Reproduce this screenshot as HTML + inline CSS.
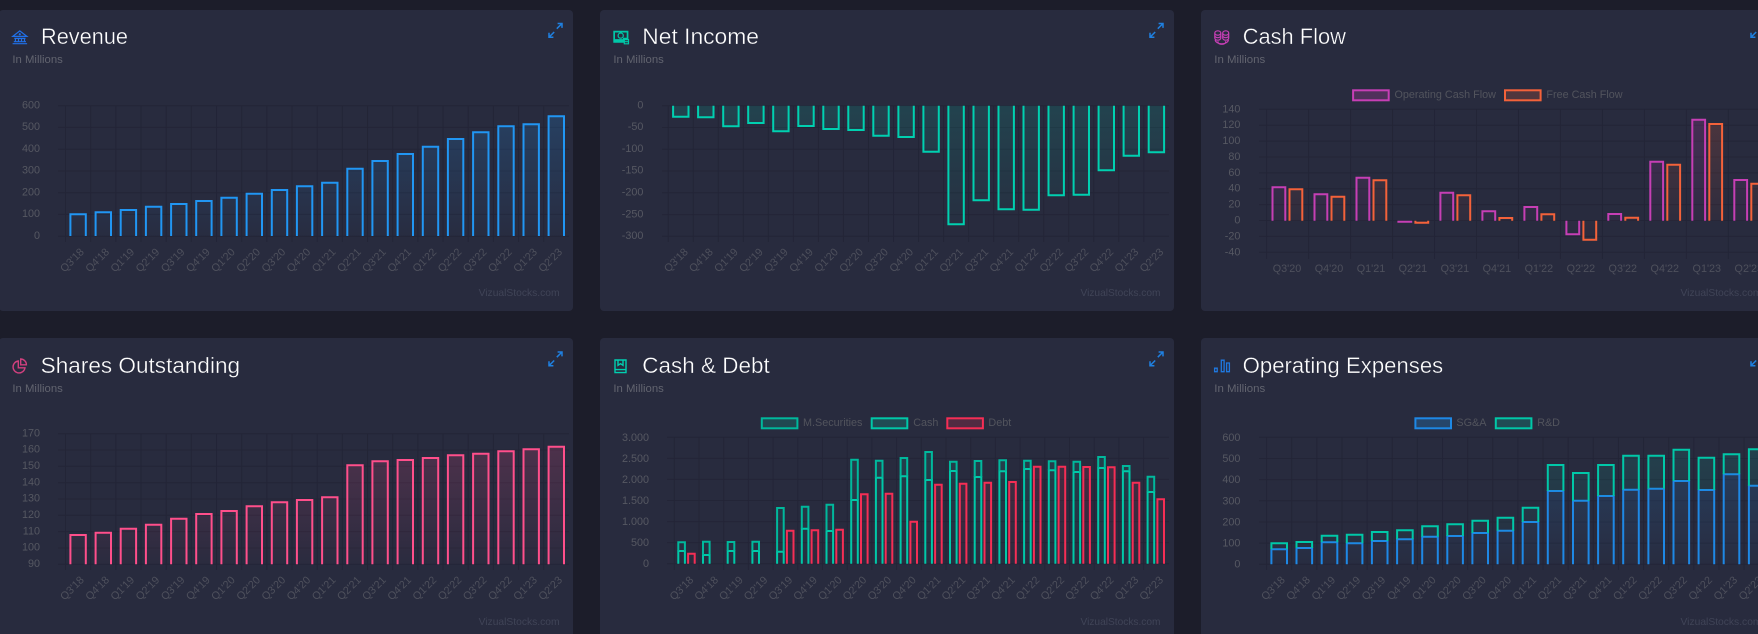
<!DOCTYPE html>
<html><head><meta charset="utf-8"><title>Charts</title>
<style>
html,body{margin:0;padding:0;background:#1c1d2a;width:1758px;height:634px;overflow:hidden}
svg{display:block}
text{font-family:"Liberation Sans",sans-serif}
.t{font-size:22px;fill:#fff;stroke:#282b3e;stroke-width:.35px}
.s{font-size:11px;fill:#62646f}
.w{font-size:10.5px;fill:#404457}
.y{font-size:10.8px;fill:#565862;text-anchor:end}
.x{font-size:10.8px;fill:#4e505c;text-anchor:middle}
.l{font-size:10.8px;fill:#52545d}
.g{fill:none;stroke:#232537;stroke-width:1}
.e{fill:none;stroke:#1f80e0;stroke-width:1.5}
.b{stroke-width:2}
</style></head><body>
<svg xmlns="http://www.w3.org/2000/svg" width="1758" height="634" viewBox="0 0 1758 634">
<defs>
<linearGradient id="gb" gradientUnits="userSpaceOnUse" x1="0" y1="100" x2="0" y2="245"><stop offset="0" stop-color="#2196f3" stop-opacity=".22"/><stop offset="1" stop-color="#2196f3" stop-opacity="0"/></linearGradient>
<linearGradient id="gt" gradientUnits="userSpaceOnUse" x1="0" y1="100" x2="0" y2="250"><stop offset="0" stop-color="#00d0b0" stop-opacity=".15"/><stop offset="1" stop-color="#00d0b0" stop-opacity="0"/></linearGradient>
<linearGradient id="gp" gradientUnits="userSpaceOnUse" x1="0" y1="100" x2="0" y2="245"><stop offset="0" stop-color="#ff4f8b" stop-opacity=".2"/><stop offset="1" stop-color="#ff4f8b" stop-opacity="0"/></linearGradient>
<linearGradient id="gu" gradientUnits="userSpaceOnUse" x1="0" y1="100" x2="0" y2="245"><stop offset="0" stop-color="#c63fb5" stop-opacity=".22"/><stop offset="1" stop-color="#c63fb5" stop-opacity="0"/></linearGradient>
<linearGradient id="go" gradientUnits="userSpaceOnUse" x1="0" y1="100" x2="0" y2="245"><stop offset="0" stop-color="#f4623a" stop-opacity=".2"/><stop offset="1" stop-color="#f4623a" stop-opacity="0"/></linearGradient>
<linearGradient id="gr" gradientUnits="userSpaceOnUse" x1="0" y1="100" x2="0" y2="245"><stop offset="0" stop-color="#f52e55" stop-opacity=".2"/><stop offset="1" stop-color="#f52e55" stop-opacity="0"/></linearGradient>
</defs>

<!-- Revenue -->
<g>
<rect x="-1" y="10" width="574" height="301" rx="4" fill="#282b3e"/>
<path fill="none" stroke="#2070e8" stroke-width="1.200" d="M12.800 36.400L19.800 30.900L26.900 36.400ZM14.300 38.400H25.500M15.400 38.400V41.400M18.500 38.400V41.400M21.500 38.400V41.400M24.500 38.400V41.400M13.800 41.700H26M12.600 43.700H27.100"/><circle cx="19.800" cy="34.200" r="1.100" fill="#2070e8"/>
<text class="t" x="41" y="44" textLength="87" lengthAdjust="spacingAndGlyphs">Revenue</text>
<text class="s" x="12.400" y="63" textLength="50.400" lengthAdjust="spacingAndGlyphs">In Millions</text>
<path class="e" d="M562 23.500L556.800 28.700M557.600 23.500H562V27.900M549 37.200L554.200 32M549 32.700V37.200H553.400"/>
<path class="g" d="M58 105.700H569M58 127.400H569M58 149.200H569M58 171H569M58 192.700H569M58 214.400H569M58 236.200H569"/>
<path class="g" d="M65.500 105.700V242m25.170-136.300V242m25.170-136.300V242m25.170-136.300V242m25.170-136.300V242m25.170-136.300V242m25.170-136.300V242m25.170-136.300V242m25.170-136.300V242m25.170-136.300V242m25.170-136.300V242m25.170-136.300V242m25.170-136.300V242m25.170-136.300V242m25.170-136.300V242m25.170-136.300V242m25.170-136.300V242m25.170-136.300V242m25.170-136.300V242m25.170-136.300V242"/>
<text class="y" x="40" y="108.400">600</text><text class="y" x="40" y="130.100">500</text><text class="y" x="40" y="151.900">400</text><text class="y" x="40" y="173.700">300</text><text class="y" x="40" y="195.400">200</text><text class="y" x="40" y="217.100">100</text><text class="y" x="40" y="238.900">0</text>
<path class="b" fill="url(#gb)" stroke="#2196f3" d="M70.400 236V214.300h15.400V236M95.600 236V212.300h15.400V236M120.700 236V210h15.400V236M145.900 236V206.700h15.400V236M171.100 236V204h15.400V236M196.200 236V201h15.400V236M221.400 236V197.700h15.400V236M246.600 236V193.700h15.400V236M271.800 236V190h15.400V236M296.900 236V186.300h15.400V236M322.100 236V182.700h15.400V236M347.300 236V168.700h15.400V236M372.400 236V161h15.400V236M397.600 236V154h15.400V236M422.800 236V146.700h15.400V236M447.900 236V139h15.400V236M473.100 236V132.300h15.400V236M498.300 236V126.300h15.400V236M523.500 236V124.300h15.400V236M548.600 236V116.300h15.400V236"/>
<text class="x" transform="translate(71.900 260) rotate(-45)" y="3.800">Q3'18</text><text class="x" transform="translate(97.100 260) rotate(-45)" y="3.800">Q4'18</text><text class="x" transform="translate(122.200 260) rotate(-45)" y="3.800">Q1'19</text><text class="x" transform="translate(147.400 260) rotate(-45)" y="3.800">Q2'19</text><text class="x" transform="translate(172.600 260) rotate(-45)" y="3.800">Q3'19</text><text class="x" transform="translate(197.800 260) rotate(-45)" y="3.800">Q4'19</text><text class="x" transform="translate(222.900 260) rotate(-45)" y="3.800">Q1'20</text><text class="x" transform="translate(248.100 260) rotate(-45)" y="3.800">Q2'20</text><text class="x" transform="translate(273.300 260) rotate(-45)" y="3.800">Q3'20</text><text class="x" transform="translate(298.400 260) rotate(-45)" y="3.800">Q4'20</text><text class="x" transform="translate(323.600 260) rotate(-45)" y="3.800">Q1'21</text><text class="x" transform="translate(348.800 260) rotate(-45)" y="3.800">Q2'21</text><text class="x" transform="translate(373.900 260) rotate(-45)" y="3.800">Q3'21</text><text class="x" transform="translate(399.100 260) rotate(-45)" y="3.800">Q4'21</text><text class="x" transform="translate(424.300 260) rotate(-45)" y="3.800">Q1'22</text><text class="x" transform="translate(449.500 260) rotate(-45)" y="3.800">Q2'22</text><text class="x" transform="translate(474.600 260) rotate(-45)" y="3.800">Q3'22</text><text class="x" transform="translate(499.800 260) rotate(-45)" y="3.800">Q4'22</text><text class="x" transform="translate(525 260) rotate(-45)" y="3.800">Q1'23</text><text class="x" transform="translate(550.100 260) rotate(-45)" y="3.800">Q2'23</text>
<text class="w" x="478.600" y="296" textLength="81" lengthAdjust="spacingAndGlyphs">VizualStocks.com</text>
</g>

<!-- Net Income -->
<g transform="translate(601 0)">
<rect x="-1" y="10" width="574" height="301" rx="4" fill="#282b3e"/>
<path fill="#00c8a8" fill-rule="evenodd" d="M12.300 30.800h15.100v9h-4.400v3h-10.700ZM14 32.500v6.600h8v-1.300h3.700v-5.300Z"/><circle cx="19.700" cy="35.600" r="2.600" fill="none" stroke="#00c8a8" stroke-width="1.200"/><path fill="none" stroke="#00c8a8" stroke-width="1.200" d="M23.300 39.600h4.200v4.200h-4.200ZM23.300 41.700h4.200"/>
<text class="t" x="41.300" y="44" textLength="116.600" lengthAdjust="spacingAndGlyphs">Net Income</text>
<text class="s" x="12.400" y="63" textLength="50.400" lengthAdjust="spacingAndGlyphs">In Millions</text>
<path class="e" d="M562 23.500L556.800 28.700M557.600 23.500H562V27.900M549 37.200L554.200 32M549 32.700V37.200H553.400"/>
<path class="g" d="M61 105.700H568M61 127.500H568M61 149.200H568M61 171H568M61 192.800H568M61 214.600H568M61 236.300H568"/>
<path class="g" d="M67.250 105.700V242m25.030-136.300V242m25.030-136.300V242m25.030-136.300V242m25.030-136.300V242m25.030-136.300V242m25.030-136.300V242m25.030-136.300V242m25.030-136.300V242m25.030-136.300V242m25.030-136.300V242m25.030-136.300V242m25.030-136.300V242m25.030-136.300V242m25.030-136.300V242m25.030-136.300V242m25.030-136.300V242m25.030-136.300V242m25.030-136.300V242m25.030-136.300V242"/>
<text class="y" x="42.400" y="108.400">0</text><text class="y" x="42.400" y="130.200">-50</text><text class="y" x="42.400" y="151.900">-100</text><text class="y" x="42.400" y="173.700">-150</text><text class="y" x="42.400" y="195.500">-200</text><text class="y" x="42.400" y="217.300">-250</text><text class="y" x="42.400" y="239">-300</text>
<path class="b" fill="url(#gt)" stroke="#00d0b0" d="M72.100 105.700V116.700h15.400V105.700M97.100 105.700V117.300h15.400V105.700M122.200 105.700V126.300h15.400V105.700M147.200 105.700V123h15.400V105.700M172.200 105.700V131.300h15.400V105.700M197.300 105.700V126h15.400V105.700M222.300 105.700V129h15.400V105.700M247.300 105.700V130h15.400V105.700M272.300 105.700V135.700h15.400V105.700M297.400 105.700V137h15.400V105.700M322.400 105.700V151.700h15.400V105.700M347.400 105.700V224.300h15.400V105.700M372.500 105.700V200.300h15.400V105.700M397.500 105.700V209.300h15.400V105.700M422.500 105.700V209.700h15.400V105.700M447.500 105.700V195.300h15.400V105.700M472.600 105.700V194.700h15.400V105.700M497.600 105.700V170.300h15.400V105.700M522.600 105.700V155.700h15.400V105.700M547.700 105.700V152.300h15.400V105.700"/>
<text class="x" transform="translate(74.800 260) rotate(-45)" y="3.800">Q3'18</text><text class="x" transform="translate(99.800 260) rotate(-45)" y="3.800">Q4'18</text><text class="x" transform="translate(124.900 260) rotate(-45)" y="3.800">Q1'19</text><text class="x" transform="translate(149.900 260) rotate(-45)" y="3.800">Q2'19</text><text class="x" transform="translate(174.900 260) rotate(-45)" y="3.800">Q3'19</text><text class="x" transform="translate(200 260) rotate(-45)" y="3.800">Q4'19</text><text class="x" transform="translate(225 260) rotate(-45)" y="3.800">Q1'20</text><text class="x" transform="translate(250 260) rotate(-45)" y="3.800">Q2'20</text><text class="x" transform="translate(275 260) rotate(-45)" y="3.800">Q3'20</text><text class="x" transform="translate(300.100 260) rotate(-45)" y="3.800">Q4'20</text><text class="x" transform="translate(325.100 260) rotate(-45)" y="3.800">Q1'21</text><text class="x" transform="translate(350.100 260) rotate(-45)" y="3.800">Q2'21</text><text class="x" transform="translate(375.200 260) rotate(-45)" y="3.800">Q3'21</text><text class="x" transform="translate(400.200 260) rotate(-45)" y="3.800">Q4'21</text><text class="x" transform="translate(425.200 260) rotate(-45)" y="3.800">Q1'22</text><text class="x" transform="translate(450.200 260) rotate(-45)" y="3.800">Q2'22</text><text class="x" transform="translate(475.300 260) rotate(-45)" y="3.800">Q3'22</text><text class="x" transform="translate(500.300 260) rotate(-45)" y="3.800">Q4'22</text><text class="x" transform="translate(525.300 260) rotate(-45)" y="3.800">Q1'23</text><text class="x" transform="translate(550.400 260) rotate(-45)" y="3.800">Q2'23</text>
<text class="w" x="479.500" y="296" textLength="80" lengthAdjust="spacingAndGlyphs">VizualStocks.com</text>
</g>

<!-- Cash Flow -->
<g transform="translate(1202 0)">
<rect x="-1" y="10" width="574" height="301" rx="4" fill="#282b3e"/>
<path fill="none" stroke="#c63fb5" stroke-width="1.200" d="M12.800 33a3 2.200 0 0 1 6 0v5a3 2.200 0 0 1-6 0ZM12.800 33a3 2.200 0 0 0 6 0M12.800 35.500a3 2.200 0 0 0 6 0M20.700 33a3 2.200 0 0 1 6 0v5a3 2.200 0 0 1-6 0ZM20.700 33a3 2.200 0 0 0 6 0M20.700 35.500a3 2.200 0 0 0 6 0M13.200 39.800a6.600 4 0 0 0 13.200 0M16 41.300v1a3.800 2 0 0 0 7.600 0v-1"/>
<text class="t" x="40.700" y="44" textLength="103.200" lengthAdjust="spacingAndGlyphs">Cash Flow</text>
<text class="s" x="12.300" y="63" textLength="50.900" lengthAdjust="spacingAndGlyphs">In Millions</text>
<path class="e" d="M562 23.500L556.800 28.700M557.600 23.500H562V27.900M549 37.200L554.200 32M549 32.700V37.200H553.400"/>
<rect x="151.100" y="90.300" width="35.600" height="10" fill="#c63fb5" fill-opacity=".25" stroke="#c63fb5" stroke-width="2"/>
<text class="l" x="192.500" y="98">Operating Cash Flow</text>
<rect x="303" y="90.300" width="35.600" height="10" fill="#f4623a" fill-opacity=".2" stroke="#f4623a" stroke-width="2"/>
<text class="l" x="344.400" y="98">Free Cash Flow</text>
<path class="g" d="M57 109.300H569M57 125.200H569M57 141.100H569M57 157H569M57 172.900H569M57 188.700H569M57 204.600H569M57 220.500H569M57 236.400H569M57 252.300H569"/>
<path class="g" d="M64.600 109.300V259m41.980-149.700V259m41.980-149.700V259m41.980-149.700V259m41.980-149.700V259m41.980-149.700V259m41.980-149.700V259m41.980-149.700V259m41.980-149.700V259m41.980-149.700V259m41.980-149.700V259m41.980-149.700V259"/>
<text class="y" x="38.400" y="112.300">140</text><text class="y" x="38.400" y="128.200">120</text><text class="y" x="38.400" y="144">100</text><text class="y" x="38.400" y="160">80</text><text class="y" x="38.400" y="175.900">60</text><text class="y" x="38.400" y="191.700">40</text><text class="y" x="38.400" y="207.600">20</text><text class="y" x="38.400" y="223.500">0</text><text class="y" x="38.400" y="239.400">-20</text><text class="y" x="38.400" y="255.300">-40</text>
<path class="b" fill="url(#gu)" stroke="#c63fb5" d="M70.500 220.700V187.300h12.800V220.700M112.500 220.700V194.300h12.800V220.700M154.500 220.700V177.700h12.800V220.700M196.400 220.700V221.700h12.800V220.700M238.400 220.700V192.700h12.800V220.700M280.400 220.700V211.300h12.800V220.700M322.400 220.700V207h12.800V220.700M364.400 220.700V234.300h12.800V220.700M406.300 220.700V214h12.800V220.700M448.300 220.700V161.700h12.800V220.700M490.300 220.700V119.700h12.800V220.700M532.300 220.700V180h12.800V220.700"/>
<path class="b" fill="url(#go)" stroke="#f4623a" d="M87.500 220.700V189.300h12.800V220.700M129.500 220.700V196.700h12.800V220.700M171.500 220.700V180.300h12.800V220.700M213.400 220.700V222.700h12.800V220.700M255.400 220.700V195.300h12.800V220.700M297.400 220.700V218h12.800V220.700M339.400 220.700V214.300h12.800V220.700M381.400 220.700V239.700h12.800V220.700M423.300 220.700V217.700h12.800V220.700M465.300 220.700V164.700h12.800V220.700M507.300 220.700V124h12.800V220.700M549.300 220.700V183.700h12.800V220.700"/>
<g class="x"><text x="85" y="272">Q3'20</text><text x="127" y="272">Q4'20</text><text x="169" y="272">Q1'21</text><text x="210.900" y="272">Q2'21</text><text x="252.900" y="272">Q3'21</text><text x="294.900" y="272">Q4'21</text><text x="336.900" y="272">Q1'22</text><text x="378.900" y="272">Q2'22</text><text x="420.800" y="272">Q3'22</text><text x="462.800" y="272">Q4'22</text><text x="504.800" y="272">Q1'23</text><text x="546.800" y="272">Q2'23</text></g>
<text class="w" x="478.500" y="296" textLength="81" lengthAdjust="spacingAndGlyphs">VizualStocks.com</text>
</g>

<!-- Shares Outstanding -->
<g transform="translate(0 328)">
<rect x="-1" y="10" width="574" height="301" rx="4" fill="#282b3e"/>
<path fill="none" stroke="#d0407e" stroke-width="1.400" d="M18.300 33A6 6 0 1 0 25 39.800H18.300ZM20.700 31A5.700 5.700 0 0 1 26.400 36.800H20.700Z"/>
<text class="t" x="40.700" y="45" textLength="199.400" lengthAdjust="spacingAndGlyphs">Shares Outstanding</text>
<text class="s" x="12.400" y="64" textLength="50.400" lengthAdjust="spacingAndGlyphs">In Millions</text>
<path class="e" d="M562 24L556.800 29.200M557.600 24H562V28.400M549 37.700L554.200 32.500M549 33.200V37.700H553.400"/>
<path class="g" d="M58 105.700H569M58 122H569M58 138.300H569M58 154.700H569M58 171H569M58 187.300H569M58 203.600H569M58 220H569M58 236.300H569"/>
<path class="g" d="M65.500 105.700V242m25.170-136.300V242m25.170-136.300V242m25.170-136.300V242m25.170-136.300V242m25.170-136.300V242m25.170-136.300V242m25.170-136.300V242m25.170-136.300V242m25.170-136.300V242m25.170-136.300V242m25.170-136.300V242m25.170-136.300V242m25.170-136.300V242m25.170-136.300V242m25.170-136.300V242m25.170-136.300V242m25.170-136.300V242m25.170-136.300V242m25.170-136.300V242"/>
<text class="y" x="40" y="108.400">170</text><text class="y" x="40" y="124.700">160</text><text class="y" x="40" y="141">150</text><text class="y" x="40" y="157.400">140</text><text class="y" x="40" y="173.700">130</text><text class="y" x="40" y="190">120</text><text class="y" x="40" y="206.300">110</text><text class="y" x="40" y="222.700">100</text><text class="y" x="40" y="239">90</text>
<path class="b" fill="url(#gp)" stroke="#ff4f8b" d="M70.400 236.300V207h15.400V236.300M95.600 236.300V204.700h15.400V236.300M120.700 236.300V200.700h15.400V236.300M145.900 236.300V196.700h15.400V236.300M171.100 236.300V190.700h15.400V236.300M196.200 236.300V186h15.400V236.300M221.400 236.300V183h15.400V236.300M246.600 236.300V178.300h15.400V236.300M271.800 236.300V174.300h15.400V236.300M296.900 236.300V172h15.400V236.300M322.100 236.300V169.300h15.400V236.300M347.300 236.300V137.300h15.400V236.300M372.400 236.300V133.300h15.400V236.300M397.600 236.300V132h15.400V236.300M422.800 236.300V130h15.400V236.300M447.900 236.300V127.300h15.400V236.300M473.100 236.300V125.700h15.400V236.300M498.300 236.300V123.300h15.400V236.300M523.500 236.300V121.300h15.400V236.300M548.600 236.300V118.700h15.400V236.300"/>
<text class="x" transform="translate(71.900 260) rotate(-45)" y="3.800">Q3'18</text><text class="x" transform="translate(97.100 260) rotate(-45)" y="3.800">Q4'18</text><text class="x" transform="translate(122.200 260) rotate(-45)" y="3.800">Q1'19</text><text class="x" transform="translate(147.400 260) rotate(-45)" y="3.800">Q2'19</text><text class="x" transform="translate(172.600 260) rotate(-45)" y="3.800">Q3'19</text><text class="x" transform="translate(197.800 260) rotate(-45)" y="3.800">Q4'19</text><text class="x" transform="translate(222.900 260) rotate(-45)" y="3.800">Q1'20</text><text class="x" transform="translate(248.100 260) rotate(-45)" y="3.800">Q2'20</text><text class="x" transform="translate(273.300 260) rotate(-45)" y="3.800">Q3'20</text><text class="x" transform="translate(298.400 260) rotate(-45)" y="3.800">Q4'20</text><text class="x" transform="translate(323.600 260) rotate(-45)" y="3.800">Q1'21</text><text class="x" transform="translate(348.800 260) rotate(-45)" y="3.800">Q2'21</text><text class="x" transform="translate(373.900 260) rotate(-45)" y="3.800">Q3'21</text><text class="x" transform="translate(399.100 260) rotate(-45)" y="3.800">Q4'21</text><text class="x" transform="translate(424.300 260) rotate(-45)" y="3.800">Q1'22</text><text class="x" transform="translate(449.500 260) rotate(-45)" y="3.800">Q2'22</text><text class="x" transform="translate(474.600 260) rotate(-45)" y="3.800">Q3'22</text><text class="x" transform="translate(499.800 260) rotate(-45)" y="3.800">Q4'22</text><text class="x" transform="translate(525 260) rotate(-45)" y="3.800">Q1'23</text><text class="x" transform="translate(550.100 260) rotate(-45)" y="3.800">Q2'23</text>
<text class="w" x="478.600" y="297" textLength="81" lengthAdjust="spacingAndGlyphs">VizualStocks.com</text>
</g>

<!-- Cash & Debt -->
<g transform="translate(601 328)">
<rect x="-1" y="10" width="574" height="301" rx="4" fill="#282b3e"/>
<path fill="none" stroke="#00d0b0" stroke-width="1.400" d="M14 32H25V44.600H14ZM14 41.600H25M17 32V37.300L19.500 35.700L22 37.300V32"/>
<text class="t" x="41.300" y="45" textLength="127.500" lengthAdjust="spacingAndGlyphs">Cash &amp; Debt</text>
<text class="s" x="12.400" y="64" textLength="50.400" lengthAdjust="spacingAndGlyphs">In Millions</text>
<path class="e" d="M562 24L556.800 29.200M557.600 24H562V28.400M549 37.700L554.200 32.500M549 33.200V37.700H553.400"/>
<rect x="160.800" y="90.300" width="35.600" height="10" fill="#00c0a0" fill-opacity=".2" stroke="#00b89c" stroke-width="2"/>
<text class="l" x="202" y="98">M.Securities</text>
<rect x="270.700" y="90.300" width="35.600" height="10" fill="#00d0b0" fill-opacity=".2" stroke="#00c8a8" stroke-width="2"/>
<text class="l" x="312.200" y="98">Cash</text>
<rect x="346.300" y="90.300" width="35.600" height="10" fill="#f52e55" fill-opacity=".2" stroke="#f52e55" stroke-width="2"/>
<text class="l" x="387.400" y="98">Debt</text>
<path class="g" d="M66 109.300H568M66 130.400H568M66 151.400H568M66 172.500H568M66 193.600H568M66 214.600H568M66 235.700H568"/>
<path class="g" d="M73.300 109.300V242m24.700-132.700V242m24.700-132.700V242m24.700-132.700V242m24.700-132.700V242m24.700-132.700V242m24.700-132.700V242m24.700-132.700V242m24.700-132.700V242m24.700-132.700V242m24.700-132.700V242m24.700-132.700V242m24.700-132.700V242m24.700-132.700V242m24.700-132.700V242m24.700-132.700V242m24.700-132.700V242m24.700-132.700V242m24.700-132.700V242m24.700-132.700V242"/>
<text class="y" x="48" y="112.800">3.000</text><text class="y" x="48" y="133.900">2.500</text><text class="y" x="48" y="154.900">2.000</text><text class="y" x="48" y="176">1.500</text><text class="y" x="48" y="197.100">1.000</text><text class="y" x="48" y="218.100">500</text><text class="y" x="48" y="239">0</text>
<path class="b" fill="url(#gt)" stroke="#00c8a8" d="M77.300 235.700V223h6.600V235.700M102 235.700V227h6.600V235.700M126.700 235.700V223h6.600V235.700M151.400 235.700V223h6.600V235.700M176.100 235.700V223.700h6.600V235.700M200.800 235.700V200.700h6.600V235.700M225.500 235.700V203h6.600V235.700M250.200 235.700V172h6.600V235.700M274.900 235.700V149.700h6.600V235.700M299.600 235.700V148.300h6.600V235.700M324.300 235.700V152h6.600V235.700M349 235.700V143h6.600V235.700M373.700 235.700V149h6.600V235.700M398.400 235.700V143.300h6.600V235.700M423.100 235.700V141h6.600V235.700M447.800 235.700V142.300h6.600V235.700M472.500 235.700V144h6.600V235.700M497.200 235.700V140h6.600V235.700M521.900 235.700V143.300h6.600V235.700M546.600 235.700V164h6.600V235.700"/>
<path class="b" fill="url(#gt)" stroke="#00b89c" d="M77.300 223V214.300h6.600V223M102 227V213.700h6.600V227M126.700 223V214h6.600V223M151.400 223V213.700h6.600V223M176.100 223.700V180h6.600V223.700M200.800 200.700V178.700h6.600V200.700M225.500 203V176.700h6.600V203M250.200 172V131.700h6.600V172M274.900 149.700V132.700h6.600V149.700M299.600 148.300V130h6.600V148.300M324.300 152V124h6.600V152M349 143V133.700h6.600V143M373.700 149V133h6.600V149M398.400 143.300V132.300h6.600V143.300M423.100 141V132.700h6.600V141M447.800 142.300V133.300h6.600V142.300M472.500 144V133.700h6.600V144M497.200 140V129h6.600V140M521.900 143.300V138h6.600V143.300M546.600 164V148.700h6.600V164"/>
<path class="b" fill="url(#gr)" stroke="#f52e55" d="M87.100 235.700V225.700h6.600V235.700M185.900 235.700V202.700h6.600V235.700M210.600 235.700V202.300h6.600V235.700M235.300 235.700V201.700h6.600V235.700M260 235.700V166.300h6.600V235.700M284.700 235.700V165.700h6.600V235.700M309.400 235.700V193.700h6.600V235.700M334.100 235.700V156.700h6.600V235.700M358.800 235.700V155.700h6.600V235.700M383.500 235.700V154.700h6.600V235.700M408.200 235.700V154h6.600V235.700M432.900 235.700V138.700h6.600V235.700M457.600 235.700V138.700h6.600V235.700M482.300 235.700V139h6.600V235.700M507 235.700V139.300h6.600V235.700M531.700 235.700V154.700h6.600V235.700M556.400 235.700V171.300h6.600V235.700"/>
<text class="x" transform="translate(80.400 260) rotate(-45)" y="3.800">Q3'18</text><text class="x" transform="translate(105.100 260) rotate(-45)" y="3.800">Q4'18</text><text class="x" transform="translate(129.800 260) rotate(-45)" y="3.800">Q1'19</text><text class="x" transform="translate(154.500 260) rotate(-45)" y="3.800">Q2'19</text><text class="x" transform="translate(179.300 260) rotate(-45)" y="3.800">Q3'19</text><text class="x" transform="translate(204 260) rotate(-45)" y="3.800">Q4'19</text><text class="x" transform="translate(228.700 260) rotate(-45)" y="3.800">Q1'20</text><text class="x" transform="translate(253.400 260) rotate(-45)" y="3.800">Q2'20</text><text class="x" transform="translate(278.200 260) rotate(-45)" y="3.800">Q3'20</text><text class="x" transform="translate(302.900 260) rotate(-45)" y="3.800">Q4'20</text><text class="x" transform="translate(327.600 260) rotate(-45)" y="3.800">Q1'21</text><text class="x" transform="translate(352.300 260) rotate(-45)" y="3.800">Q2'21</text><text class="x" transform="translate(377 260) rotate(-45)" y="3.800">Q3'21</text><text class="x" transform="translate(401.800 260) rotate(-45)" y="3.800">Q4'21</text><text class="x" transform="translate(426.500 260) rotate(-45)" y="3.800">Q1'22</text><text class="x" transform="translate(451.200 260) rotate(-45)" y="3.800">Q2'22</text><text class="x" transform="translate(475.900 260) rotate(-45)" y="3.800">Q3'22</text><text class="x" transform="translate(500.600 260) rotate(-45)" y="3.800">Q4'22</text><text class="x" transform="translate(525.400 260) rotate(-45)" y="3.800">Q1'23</text><text class="x" transform="translate(550.100 260) rotate(-45)" y="3.800">Q2'23</text>
<text class="w" x="479.500" y="297" textLength="80" lengthAdjust="spacingAndGlyphs">VizualStocks.com</text>
</g>

<!-- Operating Expenses -->
<g transform="translate(1202 328)">
<rect x="-1" y="10" width="574" height="301" rx="4" fill="#282b3e"/>
<path fill="none" stroke="#1f78e0" stroke-width="1.300" d="M12.600 40.200h2.600v3.500h-2.600ZM19.300 32.200h2.800v11.500h-2.800ZM24.600 35h2.800v8.700h-2.800Z"/>
<text class="t" x="40.700" y="45" textLength="200.500" lengthAdjust="spacingAndGlyphs">Operating Expenses</text>
<text class="s" x="12.300" y="64" textLength="50.900" lengthAdjust="spacingAndGlyphs">In Millions</text>
<path class="e" d="M562 24L556.800 29.200M557.600 24H562V28.400M549 37.700L554.200 32.500M549 33.200V37.700H553.400"/>
<rect x="213.400" y="90.300" width="35.600" height="10" fill="#2196f3" fill-opacity=".25" stroke="#1e88e5" stroke-width="2"/>
<text class="l" x="254.400" y="98">SG&amp;A</text>
<rect x="293.800" y="90.300" width="35.600" height="10" fill="#00d0b0" fill-opacity=".2" stroke="#00c8a8" stroke-width="2"/>
<text class="l" x="335.200" y="98">R&amp;D</text>
<path class="g" d="M57 109.300H568M57 130.500H568M57 151.600H568M57 172.800H568M57 194H568M57 215.100H568M57 236.300H568"/>
<path class="g" d="M64.600 109.300V242m25.130-132.700V242m25.130-132.700V242m25.130-132.700V242m25.130-132.700V242m25.130-132.700V242m25.130-132.700V242m25.130-132.700V242m25.130-132.700V242m25.130-132.700V242m25.130-132.700V242m25.130-132.700V242m25.130-132.700V242m25.130-132.700V242m25.130-132.700V242m25.130-132.700V242m25.130-132.700V242m25.130-132.700V242m25.130-132.700V242m25.130-132.700V242"/>
<text class="y" x="38.400" y="112.800">600</text><text class="y" x="38.400" y="134">500</text><text class="y" x="38.400" y="155.100">400</text><text class="y" x="38.400" y="176.300">300</text><text class="y" x="38.400" y="197.500">200</text><text class="y" x="38.400" y="218.600">100</text><text class="y" x="38.400" y="239.500">0</text>
<path class="b" fill="url(#gb)" stroke="#1e88e5" d="M69.400 236.300V221.300h15.600V236.300M94.500 236.300V220h15.600V236.300M119.700 236.300V214.300h15.600V236.300M144.800 236.300V215.300h15.600V236.300M169.900 236.300V213h15.600V236.300M195.100 236.300V211.300h15.600V236.300M220.200 236.300V208.700h15.600V236.300M245.300 236.300V208h15.600V236.300M270.400 236.300V205h15.600V236.300M295.600 236.300V202.700h15.600V236.300M320.700 236.300V194h15.600V236.300M345.800 236.300V163h15.600V236.300M371 236.300V172.700h15.600V236.300M396.100 236.300V168h15.600V236.300M421.200 236.300V161.700h15.600V236.300M446.400 236.300V160.700h15.600V236.300M471.500 236.300V153h15.600V236.300M496.600 236.300V162h15.600V236.300M521.700 236.300V146.300h15.600V236.300M546.900 236.300V157.700h15.600V236.300"/>
<path class="b" fill="url(#gt)" stroke="#00c8a8" d="M69.400 221.300V215.300h15.600V221.300M94.500 220V214h15.600V220M119.700 214.300V207.700h15.600V214.300M144.800 215.300V206.700h15.600V215.300M169.900 213V204h15.600V213M195.100 211.300V202.300h15.600V211.300M220.200 208.700V198.300h15.600V208.700M245.300 208V196.300h15.600V208M270.400 205V192.700h15.600V205M295.600 202.700V189.700h15.600V202.700M320.700 194V179.700h15.600V194M345.800 163V137h15.600V163M371 172.700V145h15.600V172.700M396.100 168V137h15.600V168M421.200 161.700V127.700h15.600V161.700M446.400 160.700V127.700h15.600V160.700M471.500 153V121.700h15.600V153M496.600 162V129.700h15.600V162M521.700 146.300V126.300h15.600V146.300M546.900 157.700V121.300h15.600V157.700"/>
<text class="x" transform="translate(70.900 260) rotate(-45)" y="3.800">Q3'18</text><text class="x" transform="translate(96 260) rotate(-45)" y="3.800">Q4'18</text><text class="x" transform="translate(121.200 260) rotate(-45)" y="3.800">Q1'19</text><text class="x" transform="translate(146.300 260) rotate(-45)" y="3.800">Q2'19</text><text class="x" transform="translate(171.400 260) rotate(-45)" y="3.800">Q3'19</text><text class="x" transform="translate(196.600 260) rotate(-45)" y="3.800">Q4'19</text><text class="x" transform="translate(221.700 260) rotate(-45)" y="3.800">Q1'20</text><text class="x" transform="translate(246.800 260) rotate(-45)" y="3.800">Q2'20</text><text class="x" transform="translate(271.900 260) rotate(-45)" y="3.800">Q3'20</text><text class="x" transform="translate(297.100 260) rotate(-45)" y="3.800">Q4'20</text><text class="x" transform="translate(322.200 260) rotate(-45)" y="3.800">Q1'21</text><text class="x" transform="translate(347.300 260) rotate(-45)" y="3.800">Q2'21</text><text class="x" transform="translate(372.500 260) rotate(-45)" y="3.800">Q3'21</text><text class="x" transform="translate(397.600 260) rotate(-45)" y="3.800">Q4'21</text><text class="x" transform="translate(422.700 260) rotate(-45)" y="3.800">Q1'22</text><text class="x" transform="translate(447.900 260) rotate(-45)" y="3.800">Q2'22</text><text class="x" transform="translate(473 260) rotate(-45)" y="3.800">Q3'22</text><text class="x" transform="translate(498.100 260) rotate(-45)" y="3.800">Q4'22</text><text class="x" transform="translate(523.200 260) rotate(-45)" y="3.800">Q1'23</text><text class="x" transform="translate(548.400 260) rotate(-45)" y="3.800">Q2'23</text>
<text class="w" x="478.500" y="297" textLength="81" lengthAdjust="spacingAndGlyphs">VizualStocks.com</text>
</g>
</svg>
</body></html>
